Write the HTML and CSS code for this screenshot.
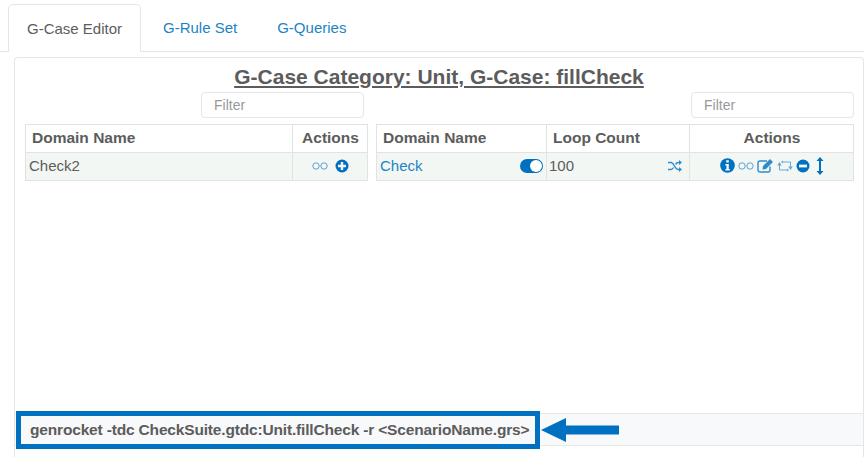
FILE: index.html
```html
<!DOCTYPE html>
<html>
<head>
    <meta charset="utf-8">
    <title>G-Case Editor</title>
    <link rel="stylesheet" href="styles.css">
</head>
<body>
    <svg class="defs" width="0" height="0">
        <symbol id="link" viewBox="0 0 16 8"><circle cx="4" cy="4" r="3.2"/><circle cx="12" cy="4" r="3.2"/></symbol>
    </svg>
    <div class="tabs">
        <div class="tab active">G-Case Editor</div>
        <div class="tab">G-Rule Set</div>
        <div class="tab">G-Queries</div>
    </div>
    <div class="panel">
        <h1 class="title">G-Case Category: Unit, G-Case: fillCheck</h1>
        <div class="columns">
            <div class="col col-left">
                <input class="filter" placeholder="Filter">
                <div class="grid grid-left">
                    <div class="cell head">Domain Name</div>
                    <div class="cell head mid">Actions</div>
                    <div class="cell">Check2</div>
                    <div class="cell icons">
                        <svg class="icon-link" width="16" height="8"><use href="#link"/></svg>
                        <svg class="solid" width="14" height="14" viewBox="0 0 14 14"><circle cx="7" cy="7" r="6.5"/><path class="knock" d="M5.8 3h2.4v2.800H11v2.400H8.200V11H5.800V8.200H3V5.800h2.800z"/></svg>
                    </div>
                </div>
            </div>
            <div class="col col-right">
                <input class="filter" placeholder="Filter">
                <div class="grid grid-right">
                    <div class="cell head">Domain Name</div>
                    <div class="cell head">Loop Count</div>
                    <div class="cell head mid">Actions</div>
                    <div class="cell spread">
                        <span class="link">Check</span>
                        <span class="toggle"><span class="knob"></span></span>
                    </div>
                    <div class="cell spread shuffle-cell">
                        <span>100</span>
                        <svg class="stroke" width="14" height="12" viewBox="0 0 14 12"><path d="M0 2.500h3c3 0 4 7 7 7h2M0 9.500h3c1.200 0 2-1 2.600-2M7.500 4.300C8.200 3.300 9 2.500 10 2.500h2"/><path class="fill" d="M11 0l3 2.500L11 5zM11 7l3 2.500L11 12z"/></svg>
                    </div>
                    <div class="cell icons tight">
                        <svg class="solid" width="15" height="15" viewBox="0 0 15 15"><circle cx="7.500" cy="7.500" r="7.300"/><path class="knock" d="M6.200 2.300h2.600v2.300H6.200zM5.400 6h3.400v5h1v1.400H5.400V11h1V7.400h-1z"/></svg>
                        <svg class="icon-link" width="16" height="8"><use href="#link"/></svg>
                        <svg class="stroke" width="17" height="15" viewBox="0 0 17 15"><path d="M13 8.500v3.500a2 2 0 0 1-2 2H3a2 2 0 0 1-2-2V5a2 2 0 0 1 2-2h7"/><path class="fill" d="M6 8l7-7 3 3-7 7-3.500.5z"/></svg>
                        <svg class="stroke thin" width="16" height="14" viewBox="0 0 16 14"><path d="M2.500 5v6h8M13.500 9V3h-8"/><path class="fill" d="M2.500 3L.2 6.500h4.600zM13.500 11l-2.300-3.500h4.600zM10 9.500l2 1.500-2 1.500zM6 1.500L4 3l2 1.500z"/></svg>
                        <svg class="solid" width="14" height="14" viewBox="0 0 14 14"><circle cx="7" cy="7" r="6.500"/><rect class="knock" x="3" y="5.600" width="8" height="2.800"/></svg>
                        <svg class="solid resize" width="8" height="18" viewBox="0 0 8 18"><path d="M4 0l3.500 4H5v10h2.500L4 18 .5 14H3V4H.5z"/></svg>
                    </div>
                </div>
            </div>
        </div>
        <div class="command">genrocket -tdc CheckSuite.gtdc:Unit.fillCheck -r &lt;ScenarioName.grs&gt;</div>
    </div>
    <div class="callout"></div>
    <svg class="arrow" width="80" height="26" viewBox="0 0 80 26"><path d="M0 13L25 1v7.500h53v9H25V25z"/></svg>
</body>
</html>
```
FILE: styles.css
```css
html, body {
    margin: 0;
    height: 457px;
    overflow: hidden;
    background: #fff;
    color: #5c5c5c;
    font-family: "Liberation Sans", Arial, sans-serif;
    font-size: 15px;
}
.defs {
    position: absolute;
}
.tabs {
    display: flex;
    box-sizing: border-box;
    height: 52px;
    padding: 4px 0 0 8px;
    border-bottom: 1px solid #e6e6e6;
}
.tab {
    padding: 15px 20px 0;
    color: #1b83c6;
    font-size: 15px;
}
.tab.active {
    width: 133px;
    box-sizing: border-box;
    height: 48px;
    margin-right: 2px;
    padding-left: 18px;
    padding-right: 0;
    color: #5c5c5c;
    background: #fff;
    border: 1px solid #e6e6e6;
    border-bottom: 0;
    border-radius: 5px 5px 0 0;
}
.panel {
    display: flex;
    flex-direction: column;
    box-sizing: border-box;
    height: 400px;
    margin: 5px 0 0 14px;
    border: 1px solid #e6e6e6;
    border-bottom: 0;
    border-radius: 4px 4px 0 0;
}
.title {
    margin: 7px 0 3px;
    font-size: 21px;
    line-height: 24px;
    text-align: center;
    text-decoration: underline;
}
.columns {
    display: flex;
    flex: 1;
    gap: 8px;
    padding: 0 8px 0 10px;
}
.col {
    display: flex;
    flex-direction: column;
    align-items: flex-end;
    gap: 6px;
}
.col-left {
    width: 343px;
}
.col-right {
    width: 478px;
}
.filter {
    box-sizing: border-box;
    width: 163px;
    height: 26px;
    padding: 0 12px;
    border: 1px solid #e4e6e8;
    border-radius: 4px;
    font-family: inherit;
    font-size: 14px;
}
.col-left .filter {
    margin-right: 4px;
}
.filter::placeholder {
    color: #999;
}
.grid {
    display: grid;
    width: 100%;
    grid-template-rows: 27px 28px;
    box-sizing: border-box;
    border: 1px solid #e2e2e2;
}
.grid-left {
    grid-template-columns: 266px 1fr;
}
.grid-right {
    grid-template-columns: 169px 143px 1fr;
}
.cell {
    display: flex;
    align-items: center;
    box-sizing: border-box;
    padding: 0 3px 2px;
    background: #f3f7f4;
    border-left: 1px solid #e2e2e2;
    border-top: 1px solid #e2e2e2;
    font-size: 15px;
}
.cell:first-child,
.grid-left .cell:nth-child(3),
.grid-right .cell:nth-child(4) {
    border-left: 0;
}
.cell.head {
    padding: 0 5px 1px 6px;
    background: #fff;
    border-top: 0;
    font-size: 15.5px;
    font-weight: bold;
}
.cell.mid {
    justify-content: center;
}
.spread {
    justify-content: space-between;
}
.shuffle-cell {
    padding-left: 2px;
    padding-right: 7px;
}
.icons {
    justify-content: center;
    gap: 7px;
    padding-right: 3px;
}
.icons.tight {
    gap: 3px;
    padding-right: 2px;
}
.resize {
    margin-left: 3px;
}
.link {
    color: #1b83c6;
}
.solid {
    fill: #0070c0;
}
.knock {
    fill: #f3f7f4;
}
.icon-link {
    fill: none;
    stroke: #5f9fd6;
    stroke-width: 1;
}
.stroke {
    fill: none;
    stroke: #2f8ccb;
    stroke-width: 1.400;
}
.stroke.thin {
    stroke: #6aa7d8;
    stroke-width: 1;
}
.stroke .fill {
    fill: #2f8ccb;
    stroke: none;
}
.stroke.thin .fill {
    fill: #6aa7d8;
}
.toggle {
    display: flex;
    justify-content: flex-end;
    align-items: center;
    box-sizing: border-box;
    width: 23px;
    height: 14px;
    padding-right: 1px;
    background: #0070c0;
    border-radius: 7px;
}
.knob {
    width: 12px;
    height: 12px;
    background: #fff;
    border-radius: 50%;
}
.command {
    box-sizing: border-box;
    height: 33px;
    margin-bottom: 11px;
    padding-left: 15px;
    background: #f8f9fa;
    border-top: 1px solid #e8e8e8;
    border-bottom: 1px solid #e8e8e8;
    font-size: 15.5px;
    font-weight: bold;
    letter-spacing: -0.17px;
    line-height: 31px;
}
.callout {
    position: absolute;
    left: 16px;
    top: 411px;
    width: 524px;
    height: 38px;
    box-sizing: border-box;
    border: 5px solid #0070c0;
}
.arrow {
    position: absolute;
    left: 541px;
    top: 417px;
    fill: #0070c0;
}
```
